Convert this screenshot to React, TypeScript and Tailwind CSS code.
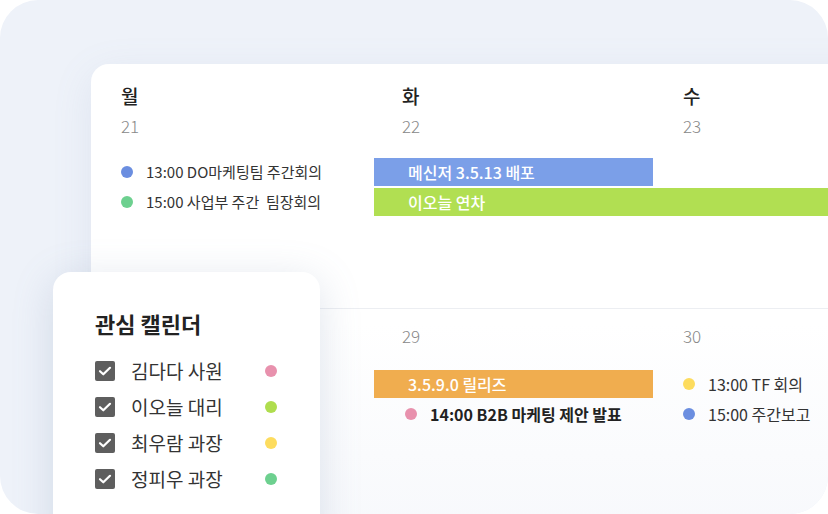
import React from 'react';

type Dot = { time: string; title: string; color: string; bold?: boolean };

const font = { fontFamily: '"Noto Sans CJK KR", "Noto Sans", sans-serif' };

const EventLine: React.FC<Dot & { inset?: string; size?: string }> = ({
  time,
  title,
  color,
  bold,
  inset = 'pl-[30px]',
  size = 'text-[15px]',
}) => (
  <div className={`flex h-[28px] items-center gap-[13px] ${inset}`}>
    <span className={`h-[12px] w-[12px] shrink-0 rounded-full ${color}`} />
    <span className={`whitespace-pre ${size} ${bold ? 'font-bold text-[#222]' : 'text-[#333]'}`}>
      {time} {title}
    </span>
  </div>
);

const Bar: React.FC<{ label: string; color: string; className?: string }> = ({ label, color, className = '' }) => (
  <div className={`flex h-[28px] items-center pl-[34px] text-[16px] font-medium text-white ${color} ${className}`}>
    {label}
  </div>
);

const calendars = [
  { name: '김다다 사원', color: 'bg-[#e891ad]' },
  { name: '이오늘 대리', color: 'bg-[#afdd4e]' },
  { name: '최우람 과장', color: 'bg-[#fddc5e]' },
  { name: '정피우 과장', color: 'bg-[#6dd08f]' },
];

const CheckBox: React.FC = () => (
  <span className="flex h-[20px] w-[20px] shrink-0 items-center justify-center rounded-[2px] bg-[#5e5e5e]">
    <svg viewBox="0 0 20 20" className="h-[20px] w-[20px]" fill="none">
      <path d="M5 10.2l3.3 3.1L15 6.8" stroke="white" strokeWidth="2.2" strokeLinecap="round" strokeLinejoin="round" />
    </svg>
  </span>
);

export default function App() {
  return (
    <div className="h-[514px] w-[828px] bg-white" style={font}>
      <div className="relative h-full w-full overflow-hidden rounded-[38px] bg-[#eef2f9]">
        {/* week view */}
        <div className="absolute left-[91px] top-[64px] h-[520px] w-[860px] rounded-tl-[18px] bg-gradient-to-b from-white via-white to-[#f5f7fb] shadow-[0_10px_40px_rgba(120,140,180,0.12)]">
          <div className="h-[244px]">
            <div className="grid grid-cols-[281px_281px_281px] pt-[20px]">
              {[
                ['월', '21'],
                ['화', '22'],
                ['수', '23'],
              ].map(([day, date]) => (
                <div key={day} className="pl-[30px]">
                  <div className="h-[24px] text-[19px] font-medium leading-[24px] text-[#222]">{day}</div>
                  <div className="mt-[6px] h-[24px] text-[17px] font-light leading-[24px] text-[#888]">{date}</div>
                </div>
              ))}
            </div>
            <div className="mt-[20px] grid grid-cols-[281px_281px_281px] grid-rows-[28px_28px] gap-y-[2px]">
              <div className="col-start-1 row-span-2 flex flex-col gap-[2px]">
                <EventLine time="13:00" title="DO마케팅팀 주간회의" color="bg-[#6b8ee0]" />
                <EventLine time="15:00" title="사업부 주간  팀장회의" color="bg-[#6dd08f]" />
              </div>
              <Bar label="메신저 3.5.13 배포" color="bg-[#7b9fe8]" className="col-start-2 row-start-1 ml-[2px]" />
              <Bar label="이오늘 연차" color="bg-[#b1df52]" className="col-span-2 col-start-2 row-start-2 ml-[2px]" />
            </div>
          </div>

          <div className="h-px bg-[#eceef2]" />

          <div className="grid grid-cols-[281px_281px_281px] pt-[15px]">
            <div />
            <div className="pl-[30px] text-[17px] font-light leading-[24px] text-[#888]">29</div>
            <div className="pl-[30px] text-[17px] font-light leading-[24px] text-[#888]">30</div>
          </div>
          <div className="mt-[22px] grid grid-cols-[281px_281px_281px] gap-y-[2px]">
            <div />
            <div className="flex flex-col gap-[2px]">
              <Bar label="3.5.9.0 릴리즈" color="bg-[#f0ad4f]" className="ml-[2px]" />
              <EventLine time="14:00" title="B2B 마케팅 제안 발표" color="bg-[#e891ad]" bold inset="pl-[33px]" size="text-[16px]" />
            </div>
            <div className="flex flex-col gap-[2px]">
              <EventLine time="13:00" title="TF 회의" color="bg-[#fddc5e]" size="text-[16px]" />
              <EventLine time="15:00" title="주간보고" color="bg-[#6b8ee0]" size="text-[16px]" />
            </div>
          </div>
        </div>

        {/* calendar filter panel */}
        <div className="absolute left-[53px] top-[272px] h-[280px] w-[267px] rounded-[18px] bg-white px-[42px] pt-[36px] shadow-[0_8px_40px_rgba(110,130,170,0.22)]">
          <div className="text-[22px] font-bold leading-[30px] text-[#222]">관심 캘린더</div>
          <ul className="mt-[15px]">
            {calendars.map((c) => (
              <li key={c.name} className="flex h-[36px] items-center">
                <CheckBox />
                <span className="ml-[16px] w-[134px] whitespace-nowrap text-[19px] text-[#333]">{c.name}</span>
                <span className={`h-[12px] w-[12px] rounded-full ${c.color}`} />
              </li>
            ))}
          </ul>
        </div>
      </div>
    </div>
  );
}
